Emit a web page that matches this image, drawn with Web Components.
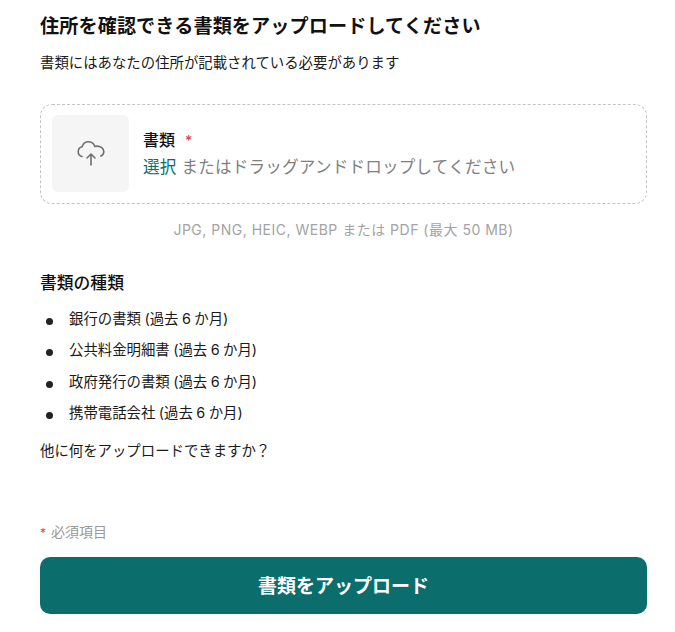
<!DOCTYPE html>
<html lang="ja">
<head>
<meta charset="UTF-8" />
<title>住所の確認</title>
<style>
  html, body { margin: 0; background: #fff; }
  body {
    font-family: Inter, "Noto Sans CJK JP", sans-serif;
    color: #1a1a1a;
  }
</style>
</head>
<body>
<address-upload-page></address-upload-page>

<script>
  class UploadDropzone extends HTMLElement {
    constructor() {
      super();
      const shadow = this.attachShadow({ mode: 'open' });
      shadow.innerHTML = `
      <style>
        :host { display: flex; align-items: center; gap: 14px; height: 100px; box-sizing: border-box;
          padding: 0 11px 2px; border: 1px dashed #c4c4c4; border-radius: 12px; }
        .thumb { width: 77px; height: 77px; border-radius: 6px; background: #f5f5f5;
          display: flex; align-items: center; justify-content: center; flex: none; }
        .text { margin-top: 2px; }
        .label { font-size: 16px; line-height: 24px; font-weight: 500; color: #111; }
        .label span { color: #cf4a4f; margin-left: 10px; font-size: 14px; }
        .hint { font-size: 16.6px; line-height: 26px; color: #7f7f7f; margin-top: 1px; letter-spacing: .18px; }
        .hint b { font-weight: 400; color: #0c6e6c; }
      </style>
      <div class="thumb">
        <svg width="28" height="28" viewBox="0 0 28 28" fill="none" stroke="#6f6f6f" stroke-width="1.6" stroke-linecap="round" stroke-linejoin="round">
          <path d="M5 17.500C2.700 16.800 1.200 15 1.200 12.700c0-2.500 1.700-4.500 3.900-5C6.200 4.600 8.300 2.800 11.300 2.800c3 0 5.400 1.800 6.500 4.600 .7-.2 1.300-.3 2-.3 3.800 0 7 2.300 7 5.600 0 2-1.200 3.500-3 4.300" />
          <path d="M14 26V15M10 19l4-4 4 4" />
        </svg>
      </div>
      <div class="text">
        <div class="label"><slot name="label"></slot><span>*</span></div>
        <div class="hint"><b>選択</b> <slot name="hint"></slot></div>
      </div>`;
    }
  }
  customElements.define('upload-dropzone', UploadDropzone);

  class DocList extends HTMLElement {
    constructor() {
      super();
      const shadow = this.attachShadow({ mode: 'open' });
      shadow.innerHTML = `
      <style>
        :host { display: flex; flex-direction: column; gap: 10.33px; }
      </style>
      <slot></slot>`;
    }
  }
  customElements.define('doc-list', DocList);

  class DocItem extends HTMLElement {
    constructor() {
      super();
      const shadow = this.attachShadow({ mode: 'open' });
      shadow.innerHTML = `
      <style>
        :host { display: flex; align-items: center; gap: 16px; padding-left: 6px;
          font-size: 14.4px; line-height: 21px; color: #1a1a1a; word-spacing: -.6px; }
        i { width: 7px; height: 7px; border-radius: 50%; background: #222; flex: none; margin-top: 6px; }
      </style>
      <i></i><div><slot></slot></div>`;
    }
  }
  customElements.define('doc-item', DocItem);

  class PrimaryButton extends HTMLElement {
    constructor() {
      super();
      const shadow = this.attachShadow({ mode: 'open' });
      shadow.innerHTML = `
      <style>
        :host { display: flex; align-items: center; justify-content: center; height: 57px; box-sizing: border-box;
          padding-bottom: 2px; border-radius: 10px; background: #0c6e6c; color: #fff; font-size: 19px; font-weight: 700; }
      </style>
      <slot></slot>`;
    }
  }
  customElements.define('primary-button', PrimaryButton);

  class AddressUploadPage extends HTMLElement {
    constructor() {
      super();
      const shadow = this.attachShadow({ mode: 'open' });
      shadow.innerHTML = `
      <style>
        :host { display: block; box-sizing: border-box; width: 675px; height: 632px; padding: 13px 28px 0 40px; }
        h1 { margin: 0; font-size: 19.1px; line-height: 26px; font-weight: 700; color: #111; letter-spacing: .13px; }
        .sub { margin: 11px 0 0; font-size: 14.4px; line-height: 26px; color: #1a1a1a; }
        upload-dropzone { margin-top: 28px; }
        .formats { margin: 15px 0 0; text-align: center; font-size: 14px; line-height: 22px; color: #a3a3a3; letter-spacing: .5px; }
        h2 { margin: 30px 0 0; font-size: 16.8px; line-height: 24px; font-weight: 500; color: #111; }
        doc-list { margin-top: 13px; }
        .more { margin: 16.7px 0 0; font-size: 14.4px; line-height: 21px; color: #1a1a1a; }
        .required { margin: 60.3px 0 0; font-size: 14px; line-height: 22px; color: #999; }
        .required span { color: #cf4a4f; margin-right: 1px; font-size: 12px; }
        primary-button { margin-top: 13px; }
      </style>
      <h1>住所を確認できる書類をアップロードしてください</h1>
      <p class="sub">書類にはあなたの住所が記載されている必要があります</p>
      <upload-dropzone>
        <span slot="label">書類</span>
        <span slot="hint">またはドラッグアンドドロップしてください</span>
      </upload-dropzone>
      <p class="formats">JPG, PNG, HEIC, WEBP または PDF (最大 50 MB)</p>
      <h2>書類の種類</h2>
      <doc-list>
        <doc-item>銀行の書類 (過去 6 か月)</doc-item>
        <doc-item>公共料金明細書 (過去 6 か月)</doc-item>
        <doc-item>政府発行の書類 (過去 6 か月)</doc-item>
        <doc-item>携帯電話会社 (過去 6 か月)</doc-item>
      </doc-list>
      <p class="more">他に何をアップロードできますか？</p>
      <p class="required"><span>*</span> 必須項目</p>
      <primary-button>書類をアップロード</primary-button>`;
    }
  }
  customElements.define('address-upload-page', AddressUploadPage);
</script>
</body>
</html>
